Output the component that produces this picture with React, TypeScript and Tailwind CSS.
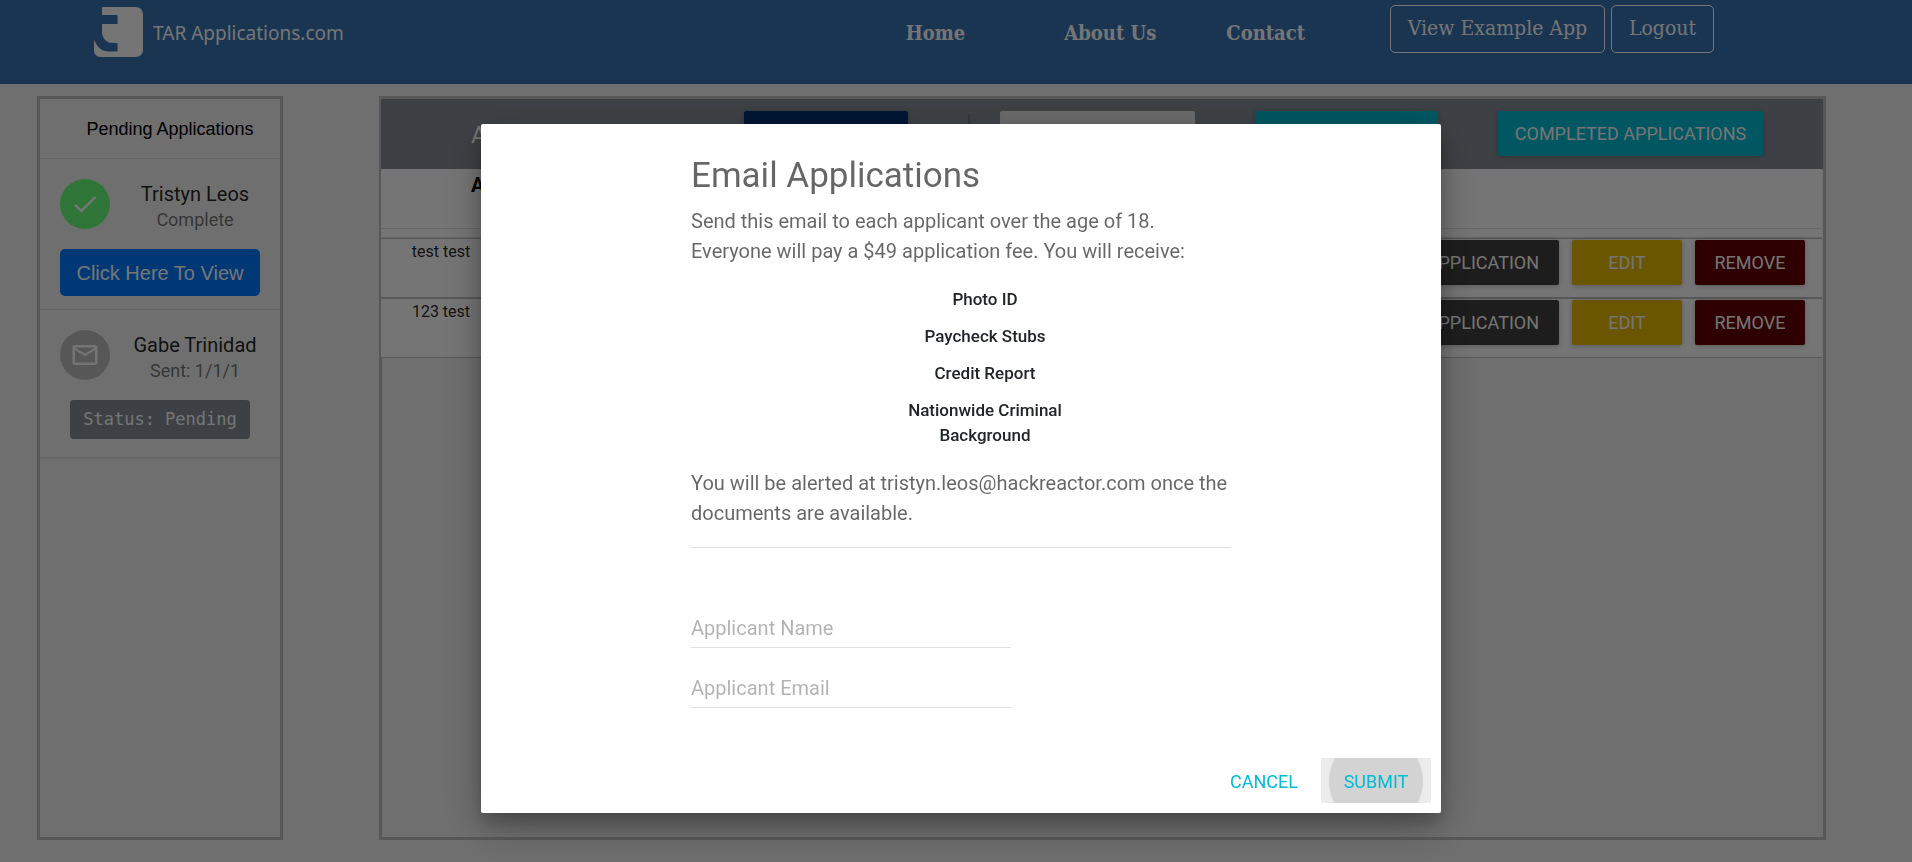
import type { ReactNode } from 'react';

function Logo() {
  return (
    <a href="#" className="flex h-[50px] items-center gap-[10px] text-white">
      <svg width="49" height="50" viewBox="0 0 49 50" fill="currentColor" aria-hidden="true">
        <path d="M8 0H42a7 7 0 0 1 7 7V43a7 7 0 0 1-7 7H6a6 6 0 0 1-6-6V33c4 8 8 11.500 15 11.500H23.500V36H19C12 36 8 31 8 25V17H23.500V8H8Z" />
      </svg>
      <span className="pt-[2px] font-['Noto_Sans',sans-serif] text-[19px] leading-6">TAR Applications.com</span>
    </a>
  );
}

function Header() {
  return (
    <header className="flex h-[84px] items-start bg-[#3973b4] pl-[94px] pr-[198px] text-white">
      <div className="pt-[7px]">
        <Logo />
      </div>
      <nav className="ml-auto flex items-start font-['DejaVu_Serif_Condensed','DejaVu_Serif',serif] leading-[30px]">
        <div className="mr-[85px] flex pt-[18px] text-[20px] font-bold">
          <a href="#" className="mr-[99px]">Home</a>
          <a href="#" className="mr-[70px]">About Us</a>
          <a href="#">Contact</a>
        </div>
        <div className="flex gap-[6px] pt-[5px] text-[21px]">
          <button type="button" className="h-12 w-[215px] rounded-[5px] border border-white pb-[2px]">
            View Example App
          </button>
          <button type="button" className="h-12 w-[103px] rounded-[5px] border border-white pb-[2px]">
            Logout
          </button>
        </div>
      </nav>
    </header>
  );
}

function Person({ icon, name, note, color }: { icon: ReactNode; name: string; note: string; color: string }) {
  return (
    <div className="flex h-[50px] items-start">
      <span className={'flex size-[50px] shrink-0 items-center justify-center rounded-full text-white ' + color}>
        {icon}
      </span>
      <div className="ml-[20px] flex-1 pt-[3px] text-center">
        <div className="text-[20px] leading-[25px] text-black/87">{name}</div>
        <div className="text-[18px] leading-[25px] text-black/54">{note}</div>
      </div>
    </div>
  );
}

function Sidebar() {
  return (
    <aside className="w-[246px] shrink-0 border-[3px] border-[#bfbfbf]">
      <h2 className="border-b border-[#dedede] pt-[18px] pb-[17px] pl-[20px] text-center font-['Liberation_Sans',sans-serif] text-[18px] leading-6 text-black">
        Pending Applications
      </h2>
      <ul>
        <li className="border-b border-[#dedede] px-[20px] pt-[20px] pb-[13px]">
          <Person
            name="Tristyn Leos"
            note="Complete"
            color="bg-[#66ff78]"
            icon={
              <svg width="30" height="30" viewBox="0 0 24 24" fill="currentColor" aria-hidden="true">
                <path d="M9 16.200L4.800 12l-1.400 1.400L9 19 21 7l-1.400-1.400L9 16.200z" />
              </svg>
            }
          />
          <button
            type="button"
            className="mt-[20px] h-[47px] w-full rounded-[5px] bg-[#007bff] font-['Liberation_Sans',sans-serif] text-[20px] text-white"
          >
            Click Here To View
          </button>
        </li>
        <li className="border-b-2 border-[#dedede] px-[20px] pt-[20px] pb-[18px]">
          <Person
            name="Gabe Trinidad"
            note="Sent: 1/1/1"
            color="bg-[#bdbdbd]"
            icon={
              <svg width="30" height="30" viewBox="0 0 24 24" fill="currentColor" aria-hidden="true">
                <path d="M20 4H4c-1.100 0-1.990.9-1.990 2L2 18c0 1.100.9 2 2 2h16c1.100 0 2-.9 2-2V6c0-1.100-.9-2-2-2zm0 14H4V8l8 5 8-5v10zm-8-7L4 6h16l-8 5z" />
              </svg>
            }
          />
          <div className="mx-[10px] mt-[20px] rounded-[4px] bg-[#868e96] py-[7px] text-center font-['DejaVu_Sans_Mono',monospace] text-[17px] leading-[25px] text-white">
            Status: Pending
          </div>
        </li>
      </ul>
    </aside>
  );
}

const raised = 'h-[45px] rounded-[2px] text-[18px] shadow-[0_1px_6px_rgba(0,0,0,0.12),0_1px_4px_rgba(0,0,0,0.12)]';

const rows = ['test test', '123 test'];

function Applications() {
  return (
    <section className="min-w-0 flex-1 border-[3px] border-[#bfbfbf]">
      <div className="-ml-px flex h-[70px] items-start bg-[#868e96] pt-[12px] pr-[60px] pl-[90px]">
        <h1 className="mr-auto pt-[8px] text-[24px] leading-8 text-white">Applications</h1>
        <button type="button" className={raised + ' w-[164px] bg-[#003071] text-white'}>EMAIL APP</button>
        <span className="mt-[3px] ml-[60px] h-[39px] w-[2px] bg-black/15" />
        <input
          type="text"
          aria-label="Search applications"
          className="ml-[30px] h-[45px] w-[195px] rounded-[2px] bg-[#e6e6e6] px-3 text-[18px]"
        />
        <button type="button" className={raised + ' ml-[60px] w-[183px] bg-[#00bcd4] text-white'}>SEARCH</button>
        <button type="button" className={raised + ' ml-[60px] w-[265px] bg-[#00bcd4] text-white'}>
          COMPLETED APPLICATIONS
        </button>
      </div>
      <div className="-ml-px mr-px bg-white">
        <table className="w-full border-separate border-spacing-0">
          <thead>
            <tr>
              <th colSpan={2} className="h-[60px] border-b border-[#e0e0e0] pt-[4px] pl-[90px] text-left align-top text-[20px] leading-[25px] font-bold text-black">
                Applicant Name
              </th>
            </tr>
          </thead>
          <tbody>
            <tr aria-hidden="true">
              <td colSpan={2} className="h-[9px] border-b border-[#e0e0e0]" />
            </tr>
            {rows.map((name) => (
              <tr key={name}>
                <td className="h-[60px] w-[120px] border-y border-[#bfbfbf] pt-px text-center align-top text-[16px] leading-6 text-black/87">
                  {name}
                </td>
                <td className="h-[60px] border-y border-[#bfbfbf] pt-px pr-[17px] align-top">
                  <div className="flex justify-end gap-[13px] text-white">
                    <button type="button" className={raised + ' bg-[#404040] px-[20px]'}>VIEW APPLICATION</button>
                    <button type="button" className={raised + ' w-[110px] bg-[#e8bb00]'}>EDIT</button>
                    <button type="button" className={raised + ' w-[110px] bg-[#680000]'}>REMOVE</button>
                  </div>
                </td>
              </tr>
            ))}
          </tbody>
        </table>
      </div>
    </section>
  );
}

const documents = ['Photo ID', 'Paycheck Stubs', 'Credit Report', 'Nationwide Criminal Background'];

const field = 'h-[40px] border-b border-[#e0e0e0] outline-none placeholder:text-black/30';

function EmailDialog() {
  return (
    <div className="fixed inset-0 flex items-start justify-center bg-black/54 pt-[124px] pl-[10px]">
      <div
        role="dialog"
        aria-modal="true"
        aria-labelledby="dialog-title"
        className="w-full max-w-[960px] rounded-[2px] bg-white shadow-[0_14px_45px_rgba(0,0,0,0.25),0_10px_18px_rgba(0,0,0,0.22)]"
      >
        <form onSubmit={(event) => event.preventDefault()}>
          <div className="px-[210px] pt-[30px] text-[20px] leading-[30px] text-black/60">
            <h2 id="dialog-title" className="text-[35px] leading-[44px]">Email Applications</h2>
            <p className="mt-[8px]">
              Send this email to each applicant over the age of 18.
              <br />
              Everyone will pay a $49 application fee. You will receive:
            </p>
            <ul className="mx-auto mt-[21px] w-[230px] pl-[48px] text-center text-[17px] leading-[25px] font-medium text-[#212529]">
              {documents.map((item) => (
                <li key={item} className="mb-[12px]">{item}</li>
              ))}
            </ul>
            <p className="mt-[20px]">
              You will be alerted at tristyn.leos@hackreactor.com once the documents are available.
            </p>
            <hr className="mt-[19px] border-[#e0e0e0]" />
            <div className="mt-[60px] flex w-[320px] flex-col gap-[20px]">
              <input type="text" aria-label="Applicant Name" placeholder="Applicant Name" className={field} />
              <input type="email" aria-label="Applicant Email" placeholder="Applicant Email" className={field} />
            </div>
          </div>
          <div className="mt-[50px] flex justify-end gap-[2px] pr-[10px] pb-[10px] text-[18px] text-[#00bcd4]">
            <button type="button" className="h-[45px] w-[110px] rounded-[2px] pt-px">CANCEL</button>
            <button type="submit" className="relative h-[45px] w-[110px] overflow-hidden rounded-[2px] bg-[#ebebeb] pt-px">
              <span className="absolute top-1/2 left-1/2 size-[94px] -translate-1/2 rounded-full bg-[#d3d3d3]" />
              <span className="relative">SUBMIT</span>
            </button>
          </div>
        </form>
      </div>
    </div>
  );
}

export default function App() {
  return (
    <div className="min-h-screen bg-[#f2f2f2] font-['Roboto',sans-serif]">
      <Header />
      <main className="flex min-h-[756px] gap-[96px] pt-[12px] pr-[86px] pl-[37px]">
        <Sidebar />
        <Applications />
      </main>
      <div className="h-[22px]" />
      <EmailDialog />
    </div>
  );
}
